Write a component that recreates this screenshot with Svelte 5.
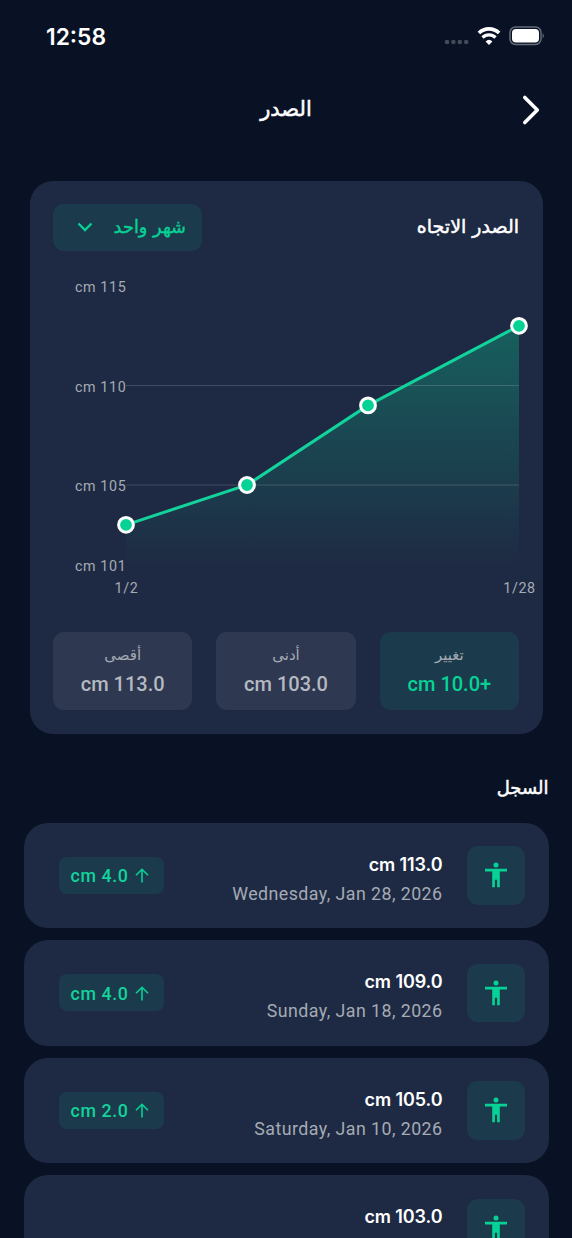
<script>
    const unit = 'cm';

    const points = [
        { x: 73, value: 103 },
        { x: 194, value: 105 },
        { x: 315, value: 109 },
        { x: 466, value: 113 }
    ];

    const ticks = [
        { value: 115, y: 22 },
        { value: 110, y: 122 },
        { value: 105, y: 221 },
        { value: 101, y: 301 }
    ];

    const stats = [
        { label: 'تغيير', value: '10.0+', active: true },
        { label: 'أدنى', value: '103.0' },
        { label: 'أقصى', value: '113.0' }
    ];

    const history = [
        { value: '113.0', date: 'Wednesday, Jan 28, 2026', change: '4.0' },
        { value: '109.0', date: 'Sunday, Jan 18, 2026', change: '4.0' },
        { value: '105.0', date: 'Saturday, Jan 10, 2026', change: '2.0' },
        { value: '103.0', date: '', change: null }
    ];

    const yFor = (value) => 215 - (value - 105) * 19.9;

    const line = points.map((p) => `${p.x},${yFor(p.value)}`).join(' ');
    const area = `73,295 ${line} 466,295`;
</script>

<div class="screen" dir="rtl">
    <div class="status-bar" dir="ltr">
        <span class="time">12:58</span>
        <div class="status-icons">
            <svg width="26" height="6" viewBox="0 0 26 6" fill="#434a59">
                <circle cx="3" cy="3" r="2.3" />
                <circle cx="9.4" cy="3" r="2.3" />
                <circle cx="15.8" cy="3" r="2.3" />
                <circle cx="22.2" cy="3" r="2.3" />
            </svg>
            <svg class="wifi" width="24" height="18" viewBox="0 0 24 18" fill="none" stroke="#fff" stroke-width="3.7">
                <path d="M1.9 6a14.6 14.6 0 0 1 20.2 0" />
                <path d="M5.5 10.5a9.3 9.3 0 0 1 13 0" stroke-width="3.3" />
                <path d="M12 18l-3.4-3.6a5 5 0 0 1 6.8 0z" fill="#fff" stroke="none" />
            </svg>
            <svg class="battery" width="36" height="20" viewBox="0 0 36 20">
                <rect x="1" y="1" width="31" height="17.5" rx="5.5" fill="none" stroke="#636a78" stroke-width="1.5" />
                <rect x="3" y="3" width="27" height="13.5" rx="4" fill="#fff" />
                <path d="M33.6 7q2.6 2.8 0 5.6z" fill="#636a78" />
            </svg>
        </div>
    </div>

    <header>
        <button class="back" aria-label="رجوع">
            <svg width="20" height="32" viewBox="0 0 20 32" fill="none" stroke="#fff" stroke-width="3.6" stroke-linecap="round" stroke-linejoin="round">
                <path d="M3.8 3.5l12.5 12.5L3.8 28.5" />
            </svg>
        </button>
        <h1>الصدر</h1>
    </header>

    <section class="card">
        <div class="card-head">
            <h2>الصدر الاتجاه</h2>
            <button class="period">
                <span>شهر واحد</span>
                <svg width="16" height="10" viewBox="0 0 16 10" fill="none" stroke="#07d296" stroke-width="2.3">
                    <path d="M1.5 1.5L8 8l6.5-6.5" />
                </svg>
            </button>
        </div>

        <svg class="chart" width="466" height="340" viewBox="0 0 466 340" direction="ltr">
            <defs>
                <linearGradient id="fill" x1="0" y1="0" x2="0" y2="1">
                    <stop offset="0" stop-color="#07d296" stop-opacity="0.32" />
                    <stop offset="1" stop-color="#07d296" stop-opacity="0" />
                </linearGradient>
            </defs>
            <polygon points={area} fill="url(#fill)" />
            <path class="grid" d="M73 115.5H466M73 215H466" />
            <polyline class="line" points={line} />
            {#each points as p}
                <circle class="dot" cx={p.x} cy={yFor(p.value)} r="7.4" />
            {/each}
            {#each ticks as tick}
                <text x="22" y={tick.y}>{unit} {tick.value}</text>
            {/each}
            <text x="73.5" y="323" text-anchor="middle">1/2</text>
            <text x="466.5" y="323" text-anchor="middle">1/28</text>
        </svg>

        <div class="stats">
            {#each stats as stat}
                <div class="stat" class:active={stat.active}>
                    <span class="stat-label">{stat.label}</span>
                    <span class="stat-value" dir="ltr">{unit} {stat.value}</span>
                </div>
            {/each}
        </div>
    </section>

    <h3>السجل</h3>

    <div class="history">
        {#each history as entry}
            <article class="entry">
                <div class="entry-icon">
                    <svg width="24" height="28" viewBox="0 0 24 28" fill="#07d296">
                        <circle cx="12" cy="3.9" r="2.5" />
                        <path d="M1 7.8h22v2.7h-7.2v15.8h-2.7v-7.5h-2.2v7.5H8.2V10.5H1z" />
                    </svg>
                </div>
                <div class="entry-text" dir="ltr">
                    <span class="entry-value">{unit} {entry.value}</span>
                    <span class="entry-date">{entry.date}</span>
                </div>
                {#if entry.change}
                    <div class="change" dir="ltr">
                        <span>{unit} {entry.change}</span>
                        <svg width="14" height="15" viewBox="0 0 14 15" fill="none" stroke="#07d296" stroke-width="1.6">
                            <path d="M7 14.5V1.5M1 7.3l6-6 6 6" />
                        </svg>
                    </div>
                {/if}
            </article>
        {/each}
    </div>
</div>

<style>
    :global(body) {
        margin: 0;
        background: #091224;
    }

    .screen {
        box-sizing: border-box;
        width: 572px;
        height: 1238px;
        overflow: hidden;
        background: #091224;
        color: #fff;
        font-family: Roboto, 'DejaVu Sans', sans-serif;
    }

    svg {
        display: block;
        flex: none;
    }

    button {
        border: 0;
        padding: 0;
        background: none;
        font: inherit;
        cursor: pointer;
    }

    h1,
    h2,
    h3 {
        margin: 0;
        font-family: 'DejaVu Sans', sans-serif;
        font-weight: 400;
        -webkit-text-stroke: 0.5px #fff;
    }

    .status-bar {
        display: flex;
        justify-content: space-between;
        align-items: center;
        height: 72px;
        padding: 0 27px 0 46px;
    }

    .time {
        font-family: Inter, sans-serif;
        font-size: 22.8px;
        font-weight: 600;
    }

    .status-icons {
        display: flex;
        align-items: center;
    }

    .status-icons svg:first-child {
        margin-top: 12px;
    }

    .wifi {
        margin: 0 8px 0 7px;
    }

    header {
        display: grid;
        grid-template-columns: 60px 1fr 60px;
        align-items: center;
        height: 76px;
    }

    .back {
        justify-self: center;
        padding-right: 22px;
    }

    h1 {
        padding-bottom: 3px;
        text-align: center;
        font-size: 21px;
    }

    .card {
        box-sizing: border-box;
        width: 513px;
        height: 553px;
        margin: 32.5px auto 0;
        padding: 23.5px;
        border-radius: 23px;
        background: #1e2a43;
    }

    .card-head {
        display: flex;
        justify-content: space-between;
        align-items: center;
        height: 46.5px;
    }

    h2 {
        padding-bottom: 2px;
        font-size: 19px;
    }

    .period {
        box-sizing: border-box;
        display: flex;
        justify-content: space-between;
        align-items: center;
        width: 149px;
        height: 46.5px;
        padding: 0 16px 0 24px;
        border-radius: 11px;
        background: #1b3b4c;
        color: #07d296;
        font: 17.8px 'DejaVu Sans', sans-serif;
        -webkit-text-stroke: 0.4px #07d296;
    }

    .period span {
        padding-bottom: 2px;
    }

    .chart {
        margin: 19.5px 0 22px;
        overflow: visible;
    }

    .chart text {
        fill: #a5aab4;
        font-size: 14.3px;
        letter-spacing: 0.6px;
    }

    .grid {
        stroke: #fff;
        stroke-opacity: 0.16;
    }

    .line {
        fill: none;
        stroke: #12d39b;
        stroke-width: 3;
    }

    .dot {
        fill: #07d296;
        stroke: #fff;
        stroke-width: 3;
    }

    .stats {
        display: flex;
        gap: 24px;
    }

    .stat {
        flex: 1;
        display: flex;
        flex-direction: column;
        align-items: center;
        justify-content: center;
        gap: 6px;
        height: 78px;
        border-radius: 11px;
        background: #2e3850;
        color: #b5b9c1;
    }

    .stat-label {
        height: 20px;
        color: #a5aab4;
        font: 15px/20px 'DejaVu Sans', sans-serif;
    }

    .stat-value {
        font-size: 20px;
        line-height: 26px;
        font-weight: 500;
    }

    .active {
        background: #1b3b4c;
    }

    .active .stat-value {
        color: #07d296;
    }

    h3 {
        height: 30px;
        margin: 39px 23.5px 20px;
        font-size: 18px;
        line-height: 30px;
    }

    .history {
        display: flex;
        flex-direction: column;
        gap: 12px;
        padding: 0 23.5px;
    }

    .entry {
        box-sizing: border-box;
        display: flex;
        align-items: center;
        height: 105.5px;
        padding: 0 23.5px 0 35px;
        border-radius: 24px;
        background: #1e2a43;
    }

    .entry-icon {
        display: grid;
        place-items: center;
        width: 58.5px;
        height: 58.5px;
        border-radius: 11px;
        background: #1b3b4c;
    }

    .entry-text {
        flex: 1;
        display: flex;
        flex-direction: column;
        align-items: flex-end;
        gap: 4px;
        margin-right: 24px;
        padding-top: 6.5px;
    }

    .entry-value {
        font-family: Inter, sans-serif;
        font-size: 18px;
        line-height: 25px;
        font-weight: 600;
        letter-spacing: -0.1px;
    }

    .entry-date {
        height: 25px;
        color: #a5aab4;
        font-size: 17.8px;
        line-height: 25px;
        letter-spacing: 0.45px;
    }

    .change {
        box-sizing: border-box;
        display: flex;
        align-items: center;
        justify-content: space-between;
        width: 105.5px;
        height: 37px;
        padding: 1px 15px 0 12px;
        border-radius: 8px;
        background: #1b3b4c;
        color: #12d39b;
        font-size: 17.8px;
        font-weight: 500;
        letter-spacing: 0.6px;
    }
</style>
